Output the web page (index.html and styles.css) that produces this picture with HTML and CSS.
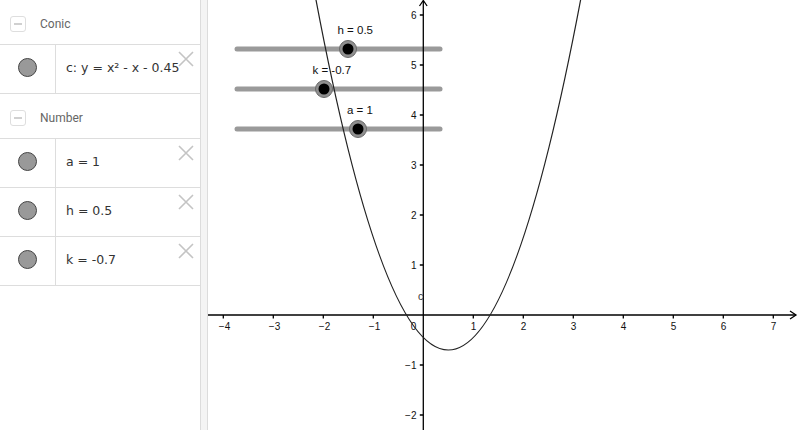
FILE: index.html
```html
<!DOCTYPE html>
<html>
<head>
<meta charset="utf-8">
<link rel="stylesheet" href="styles.css">
</head>
<body>
<div class="app">
  <div class="algebra">
    <div class="group-header">
      <span class="toggle"><span class="toggle-bar"></span></span>
      <span class="group-title">Conic</span>
    </div>
    <div class="item">
      <div class="marble-cell"><span class="marble"></span></div>
      <div class="formula">c: y = x² - x - 0.45</div>
      <svg class="close" viewBox="0 0 16 16"><path d="M1 1 L15 15 M15 1 L1 15"/></svg>
    </div>
    <div class="group-header">
      <span class="toggle"><span class="toggle-bar"></span></span>
      <span class="group-title">Number</span>
    </div>
    <div class="item">
      <div class="marble-cell"><span class="marble"></span></div>
      <div class="formula">a = 1</div>
      <svg class="close" viewBox="0 0 16 16"><path d="M1 1 L15 15 M15 1 L1 15"/></svg>
    </div>
    <div class="item">
      <div class="marble-cell"><span class="marble"></span></div>
      <div class="formula">h = 0.5</div>
      <svg class="close" viewBox="0 0 16 16"><path d="M1 1 L15 15 M15 1 L1 15"/></svg>
    </div>
    <div class="item">
      <div class="marble-cell"><span class="marble"></span></div>
      <div class="formula">k = -0.7</div>
      <svg class="close" viewBox="0 0 16 16"><path d="M1 1 L15 15 M15 1 L1 15"/></svg>
    </div>
  </div>
  <div class="divider"></div>
  <div class="graphics">
    <svg class="plot" width="592" height="430" viewBox="208 0 592 430">
      <!-- slider tracks -->
      <g class="track">
        <line x1="237" y1="49" x2="440" y2="49"/>
        <line x1="237" y1="89" x2="440" y2="89"/>
        <line x1="237" y1="129" x2="440" y2="129"/>
      </g>
      <!-- axes -->
      <g class="axis">
        <line x1="208" y1="315" x2="796" y2="315"/>
        <polyline points="790,311 796,315 790,319"/>
        <line x1="423.3" y1="430" x2="423.3" y2="1"/>
        <polyline points="419.5,6 423.3,0.5 427.1,6"/>
        <path d="M223.3 315v3.5M273.3 315v3.5M323.3 315v3.5M373.3 315v3.5M473.3 315v3.5M523.3 315v3.5M573.3 315v3.5M623.3 315v3.5M673.3 315v3.5M723.3 315v3.5M773.3 315v3.5"/>
        <path d="M423.3 15h-3.5M423.3 65h-3.5M423.3 115h-3.5M423.3 165h-3.5M423.3 215h-3.5M423.3 265h-3.5M423.3 365h-3.5M423.3 415h-3.5"/>
      </g>
      <g class="tick-label">
        <text x="224.5" y="329.5" text-anchor="middle">−4</text>
        <text x="274.5" y="329.5" text-anchor="middle">−3</text>
        <text x="324.5" y="329.5" text-anchor="middle">−2</text>
        <text x="374.5" y="329.5" text-anchor="middle">−1</text>
        <text x="413.5" y="329.5" text-anchor="middle">0</text>
        <text x="473.5" y="329.5" text-anchor="middle">1</text>
        <text x="523.5" y="329.5" text-anchor="middle">2</text>
        <text x="573.5" y="329.5" text-anchor="middle">3</text>
        <text x="623.5" y="329.5" text-anchor="middle">4</text>
        <text x="673.5" y="329.5" text-anchor="middle">5</text>
        <text x="723.5" y="329.5" text-anchor="middle">6</text>
        <text x="773.5" y="329.5" text-anchor="middle">7</text>
        <text x="416.5" y="18.5" text-anchor="end">6</text>
        <text x="416.5" y="68.5" text-anchor="end">5</text>
        <text x="416.5" y="118.5" text-anchor="end">4</text>
        <text x="416.5" y="168.5" text-anchor="end">3</text>
        <text x="416.5" y="218.5" text-anchor="end">2</text>
        <text x="416.5" y="268.5" text-anchor="end">1</text>
        <text x="416.5" y="368.5" text-anchor="end">−1</text>
        <text x="416.5" y="418.5" text-anchor="end">−2</text>
      </g>
      <!-- parabola y = x^2 - x - 0.45 -->
      <path class="curve" d="M313.3 -14.5 Q448.3 714.5 583.3 -14.5"/>
      <text class="obj-label" x="418" y="300">c</text>
      <!-- slider knobs -->
      <g class="knob">
        <circle class="ring" cx="348" cy="49" r="8.5"/>
        <circle class="dot" cx="348" cy="49" r="5.5"/>
        <circle class="ring" cx="324" cy="89" r="8.5"/>
        <circle class="dot" cx="324" cy="89" r="5.5"/>
        <circle class="ring" cx="358" cy="129" r="8.5"/>
        <circle class="dot" cx="358" cy="129" r="5.5"/>
      </g>
      <g class="slider-label">
        <text x="337.5" y="33.5">h = 0.5</text>
        <text x="312.5" y="73.5">k = -0.7</text>
        <text x="347" y="113.5">a = 1</text>
      </g>
    </svg>
  </div>
</div>
</body>
</html>
```

FILE: styles.css
```css
html, body {
  margin: 0;
  padding: 0;
  background: #ffffff;
}

.app {
  display: flex;
  width: 800px;
  height: 430px;
  overflow: hidden;
}

.algebra {
  width: 200px;
  flex: none;
  display: flex;
  flex-direction: column;
  background: #ffffff;
}

.group-header {
  box-sizing: border-box;
  height: 45px;
  display: flex;
  align-items: center;
  padding: 4px 0 0 10px;
  border-bottom: 1px solid #dddddd;
}

.toggle {
  box-sizing: border-box;
  width: 16px;
  height: 16px;
  border: 1px solid #dedede;
  border-radius: 3px;
  display: flex;
  align-items: center;
  justify-content: center;
}

.toggle-bar {
  width: 8px;
  height: 2px;
  background: #d0d0d0;
}

.group-title {
  margin-left: 14px;
  font-family: Roboto, "Liberation Sans", sans-serif;
  font-size: 12px;
  color: #666666;
}

.item {
  position: relative;
  box-sizing: border-box;
  height: 49px;
  display: flex;
  align-items: stretch;
  border-bottom: 1px solid #dddddd;
}

.marble-cell {
  width: 56px;
  flex: none;
  border-right: 1px solid #dddddd;
  display: flex;
  align-items: center;
  justify-content: center;
  padding-bottom: 4px;
  box-sizing: border-box;
}

.marble {
  box-sizing: border-box;
  width: 19px;
  height: 19px;
  border-radius: 50%;
  background: #999999;
  border: 1px solid #444444;
}

.formula {
  display: flex;
  align-items: center;
  padding: 0 0 4px 10px;
  font-family: "DejaVu Sans", sans-serif;
  font-size: 12.5px;
  color: #333333;
  white-space: nowrap;
}

.close {
  position: absolute;
  top: 6px;
  right: 6px;
  width: 16px;
  height: 16px;
  fill: none;
  stroke: #c4c4c4;
  stroke-width: 1.6;
}

.divider {
  width: 8px;
  flex: none;
  box-sizing: border-box;
  background: #f4f4f4;
  border-left: 1px solid #dcdcdc;
  border-right: 1px solid #dcdcdc;
}

.graphics {
  flex: 1;
  background: #ffffff;
}

.plot {
  display: block;
}

.track line {
  stroke: #9a9a9a;
  stroke-width: 5;
  stroke-linecap: round;
}

.axis line,
.axis path,
.axis polyline {
  stroke: #000000;
  stroke-width: 1.3;
  fill: none;
}

.tick-label text {
  font-family: "Liberation Sans", Arial, sans-serif;
  font-size: 10px;
  fill: #111111;
}

.curve {
  fill: none;
  stroke: #222222;
  stroke-width: 1.2;
}

.obj-label {
  font-family: "Liberation Sans", Arial, sans-serif;
  font-size: 10.5px;
  fill: #333333;
}

.knob .ring {
  fill: #8f8f8f;
  stroke: #6a6a6a;
  stroke-width: 1;
}

.knob .dot {
  fill: #000000;
}

.slider-label text {
  font-family: "Liberation Sans", Arial, sans-serif;
  font-size: 11.5px;
  fill: #111111;
}
```
